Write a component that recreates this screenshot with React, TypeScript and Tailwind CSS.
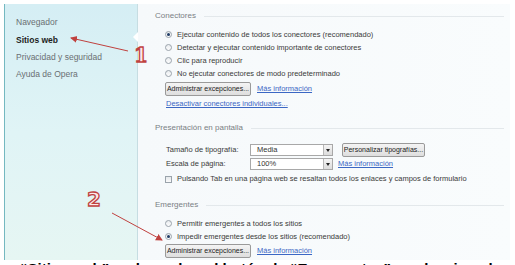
import React from 'react';

// Ajustes de "Sitios web" con anotaciones
const font = { fontFamily: '"Liberation Sans", Arial, sans-serif' };

const Radio = ({ checked }: { checked?: boolean }) => (
  <span className="w-[7px] h-[7px] rounded-full border border-[#9aa3ab] bg-gradient-to-b from-[#e9ecef] to-[#fdfdfd] flex items-center justify-center shrink-0">
    {checked && <span className="w-[3px] h-[3px] rounded-full bg-[#1f3b63]" />}
  </span>
);

const Button = ({ label, w }: { label: string; w: string }) => (
  <div className={`${w} h-[14px] border border-[#9a9a9a] rounded-[2px] bg-gradient-to-b from-[#f4f4f4] to-[#dedede] flex items-center justify-center text-[7px] text-[#222] whitespace-nowrap overflow-hidden`}>
    {label}
  </div>
);

const Select = ({ value }: { value: string }) => (
  <div className="w-[83px] h-[12px] border border-[#a8a8a8] bg-white flex items-center">
    <span className="flex-1 pl-[6px] text-[7.5px] text-[#333]">{value}</span>
    <span className="w-[9px] h-[10px] border-l border-[#b8b8b8] bg-gradient-to-b from-[#f4f4f4] to-[#dcdcdc] flex items-center justify-center">
      <span className="w-0 h-0 border-l-[2.5px] border-r-[2.5px] border-t-[3px] border-l-transparent border-r-transparent border-t-[#222]" />
    </span>
  </div>
);

const Heading = ({ title, className }: { title: string; className: string }) => (
  <div className={`h-[12px] flex items-center gap-[8px] pl-[17px] pr-[6px] ${className}`}>
    <span className="text-[8px] text-[#7a7f84] whitespace-nowrap">{title}</span>
    <span className="flex-1 h-px bg-[#e3e8eb]" />
  </div>
);

const RadioRow = ({ label, checked }: { label: string; checked?: boolean }) => (
  <div className="h-[13px] flex items-center gap-[5px] pl-[27px] text-[7.5px] text-[#3a3a3a] whitespace-nowrap">
    <Radio checked={checked} />
    <span>{label}</span>
  </div>
);

const Link = ({ text }: { text: string }) => (
  <span className="text-[7.5px] text-[#3b67c4] underline whitespace-nowrap">{text}</span>
);

const menu = ['Navegador', 'Sitios web', 'Privacidad y seguridad', 'Ayuda de Opera'];

export default function App() {
  return (
    <div className="relative w-[515px] h-[265px] bg-white overflow-hidden" style={font}>
      <div className="flex pt-[4px] pl-[4px] pr-[5px] h-[260px]">
        {/* Barra lateral */}
        <div className="relative w-[134px] h-full border-l border-[#74b8c0] border-r border-r-[#c6dde2] bg-gradient-to-b from-[#d5eef4] via-[#e0f4f6] to-[#e6f6f3]">
          <div className="flex flex-col pt-[10px] pl-[11px]">
            {menu.map((m) => (
              <div
                key={m}
                className={`h-[17.3px] flex items-center text-[8.5px] whitespace-nowrap ${
                  m === 'Sitios web' ? 'font-bold text-[#1e1e1e]' : 'text-[#6a6f73]'
                }`}
              >
                {m}
              </div>
            ))}
          </div>
          <span className="absolute right-[-1px] top-[28px] w-0 h-0 border-t-[5px] border-b-[5px] border-r-[5px] border-t-transparent border-b-transparent border-r-white" />
        </div>

        {/* Contenido */}
        <div className="flex-1 h-full bg-gradient-to-r from-[#f6f9fb] to-[#f9fcfd] flex flex-col pt-[6px]">
          <Heading title="Conectores" className="" />
          <div className="mt-[6px]">
            <RadioRow label="Ejecutar contenido de todos los conectores (recomendado)" checked />
            <RadioRow label="Detectar y ejecutar contenido importante de conectores" />
            <RadioRow label="Clic para reproducir" />
            <RadioRow label="No ejecutar conectores de modo predeterminado" />
          </div>
          <div className="mt-[2px] h-[14px] flex items-center gap-[6px] pl-[27px]">
            <Button label="Administrar excepciones..." w="w-[86px]" />
            <Link text="Más información" />
          </div>
          <div className="mt-[2px] h-[12px] flex items-center pl-[28px]">
            <Link text="Desactivar conectores individuales..." />
          </div>

          <Heading title="Presentación en pantalla" className="mt-[12px]" />
          <div className="mt-[9px] h-[14px] flex items-center pl-[28px] text-[7.5px] text-[#3a3a3a]">
            <span className="w-[84px]">Tamaño de tipografía:</span>
            <Select value="Media" />
            <div className="ml-[9px]">
              <Button label="Personalizar tipografías..." w="w-[83px]" />
            </div>
          </div>
          <div className="h-[14px] flex items-center pl-[28px] text-[7.5px] text-[#3a3a3a]">
            <span className="w-[84px]">Escala de página:</span>
            <Select value="100%" />
            <span className="ml-[5px]">
              <Link text="Más información" />
            </span>
          </div>
          <div className="mt-[2px] h-[12px] flex items-center gap-[5px] pl-[27px] text-[7.5px] text-[#3a3a3a] whitespace-nowrap">
            <span className="w-[7px] h-[7px] border border-[#9aa3ab] bg-gradient-to-b from-[#e6e9ec] to-[#fbfbfb] shrink-0" />
            <span>Pulsando Tab en una página web se resaltan todos los enlaces y campos de formulario</span>
          </div>

          <Heading title="Emergentes" className="mt-[14px]" />
          <div className="mt-[6px]">
            <RadioRow label="Permitir emergentes a todos los sitios" />
            <RadioRow label="Impedir emergentes desde los sitios (recomendado)" checked />
          </div>
          <div className="mt-[1px] h-[14px] flex items-center gap-[6px] pl-[27px]">
            <Button label="Administrar excepciones..." w="w-[86px]" />
            <Link text="Más información" />
          </div>
        </div>
      </div>

      {/* Texto recortado al pie */}
      <div className="h-[5px] overflow-hidden">
        <div className="pl-[20px] pt-[3px] text-[15px] leading-[12px] font-bold text-black whitespace-nowrap">
          “Sitios web”, pulsa sobre el botón de “Emergentes” y selecciona la opción “Impedir”
        </div>
      </div>

      {/* Anotaciones */}
      <svg className="absolute inset-0 pointer-events-none" width="515" height="265">
        <defs>
          <marker id="ah" markerWidth="8" markerHeight="8" refX="6" refY="4" orient="auto" markerUnits="userSpaceOnUse">
            <path d="M0,0.5 L7,4 L0,7.5 Z" fill="#c0413f" />
          </marker>
        </defs>
        <line x1="128" y1="51" x2="71" y2="38" stroke="#c0413f" strokeWidth="1" markerEnd="url(#ah)" />
        <line x1="112" y1="213" x2="162" y2="240" stroke="#c0413f" strokeWidth="1" markerEnd="url(#ah)" />
        <text x="134" y="62" fontSize="20" fontWeight="bold" fontFamily='"DejaVu Serif", serif' fill="#fbe9e9" stroke="#c0413f" strokeWidth="1.3">1</text>
        <text x="87" y="206" fontSize="20" fontWeight="bold" fontFamily='"DejaVu Sans", sans-serif' fill="#fbe9e9" stroke="#c0413f" strokeWidth="1.3">2</text>
      </svg>
    </div>
  );
}
